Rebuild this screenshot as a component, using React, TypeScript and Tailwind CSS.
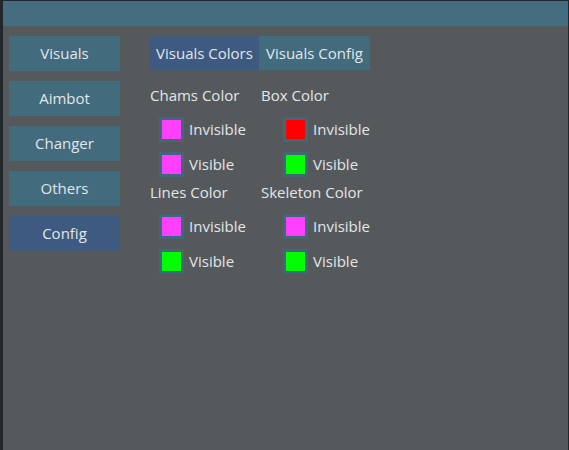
const FONT = { fontFamily: '"Open Sans", "Noto Sans", sans-serif' };

const sideItems = ["Visuals", "Aimbot", "Changer", "Others", "Config"];

function Swatch({ color, label }: { color: string; label: string }) {
  return (
    <div className="flex h-[35px] items-center gap-[5px]">
      <div className="flex h-[25px] w-[25px] items-center justify-center bg-[#41687a]">
        <div className="h-[19px] w-[19px]" style={{ backgroundColor: color }} />
      </div>
      <span className="text-[15px] text-[#e2e6e8]">{label}</span>
    </div>
  );
}

function Group({
  left,
  right,
  leftColors,
  rightColors,
}: {
  left: string;
  right: string;
  leftColors: [string, string];
  rightColors: [string, string];
}) {
  return (
    <div className="flex flex-col">
      <div className="flex h-[20px] items-center text-[15px] text-[#e2e6e8]">
        <span className="w-[111px]">{left}</span>
        <span>{right}</span>
      </div>
      <div className="mt-[7px] flex">
        <div className="w-[133px] pl-[9px]">
          <Swatch color={leftColors[0]} label="Invisible" />
          <Swatch color={leftColors[1]} label="Visible" />
        </div>
        <div>
          <Swatch color={rightColors[0]} label="Invisible" />
          <Swatch color={rightColors[1]} label="Visible" />
        </div>
      </div>
    </div>
  );
}

export default function App() {
  return (
    <div
      className="flex h-[450px] w-[569px] flex-col border-l-[3px] border-r border-t border-[#22272b] bg-[#56595c]"
      style={FONT}
    >
      <div className="h-[25px] shrink-0 bg-[#456c7f]" />
      <div className="flex gap-[30px] pl-[6px] pt-[10px]">
        <div className="flex w-[111px] flex-col gap-[10px]">
          {sideItems.map((item) => (
            <div
              key={item}
              className={`flex h-[35px] items-center justify-center text-[15px] text-[#e2e6e8] ${
                item === "Config" ? "bg-[#3e5a80]" : "bg-[#426b7e]"
              }`}
            >
              {item}
            </div>
          ))}
        </div>
        <div className="flex flex-col">
          <div className="flex h-[34px] text-[15px] text-[#e2e6e8]">
            <div className="flex w-[109px] items-center justify-center bg-[#3e5a80]">Visuals Colors</div>
            <div className="flex w-[111px] items-center justify-center bg-[#426b7e]">Visuals Config</div>
          </div>
          <div className="mt-[15px] flex flex-col">
            <Group
              left="Chams Color"
              right="Box Color"
              leftColors={["#ff40ff", "#ff40ff"]}
              rightColors={["#ff0000", "#00ff00"]}
            />
            <Group
              left="Lines Color"
              right="Skeleton Color"
              leftColors={["#ff40ff", "#00ff00"]}
              rightColors={["#ff40ff", "#00ff00"]}
            />
          </div>
        </div>
      </div>
    </div>
  );
}
